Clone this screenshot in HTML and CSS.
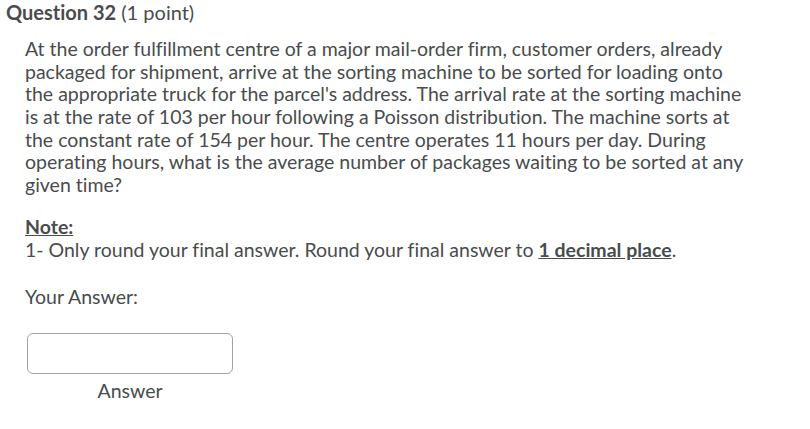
FILE: index.html
```html
<!DOCTYPE html>
<html>
<head>
<meta charset="utf-8">
<link rel="stylesheet" href="styles.css">
</head>
<body>
<div class="question">
  <h2 class="q-title"><strong>Question 32</strong> <span class="pts">(1 point)</span></h2>
  <div class="q-body">
    <p class="stem">At the order fulfillment centre of a major mail-order firm, customer orders, already packaged for shipment, arrive at the sorting machine to be sorted for loading onto the appropriate truck for the parcel's address. The arrival rate at the sorting machine is at the rate of 103 per hour following a Poisson distribution. The machine sorts at the constant rate of 154 per hour. The centre operates 11 hours per day. During operating hours, what is the average number of packages waiting to be sorted at any given time?</p>
    <p class="note"><strong class="u">Note:</strong><br>1- Only round your final answer. Round your final answer to <strong class="u">1 decimal place</strong>.</p>
    <p class="label">Your Answer:</p>
    <div class="answer">
      <input class="answer-input" type="text">
      <span class="answer-label">Answer</span>
    </div>
  </div>
</div>
</body>
</html>
```
FILE: styles.css
```css
html, body {
  margin: 0;
  padding: 0;
  background: #ffffff;
}
body {
  font-family: Lato, "Noto Sans", sans-serif;
  color: #494c4e;
  font-variant-ligatures: none;
}
.question {
  padding: 1px 0 0 6px;
}
.q-title {
  margin: 0;
  font-size: 20px;
  line-height: 22.6px;
  font-weight: 400;
}
.q-title strong {
  font-weight: 700;
}
.q-body {
  width: 730px;
  padding: 14.7px 0 0 19px;
  font-size: 19.5px;
  line-height: 22.6px;
}
.stem {
  margin: 0;
}
.note {
  margin: 19.5px 0 0;
}
.u {
  text-decoration: underline;
  font-weight: 700;
}
.label {
  margin: 24.8px 0 0;
}
.answer {
  display: flex;
  flex-direction: column;
  align-items: center;
  width: 206px;
  margin: 24px 0 0 2px;
}
.answer-input {
  box-sizing: border-box;
  width: 206px;
  height: 41px;
  border: 1px solid #a0a2a4;
  border-radius: 6px;
  margin: 0;
}
.answer-label {
  margin-top: 6.6px;
}
```
